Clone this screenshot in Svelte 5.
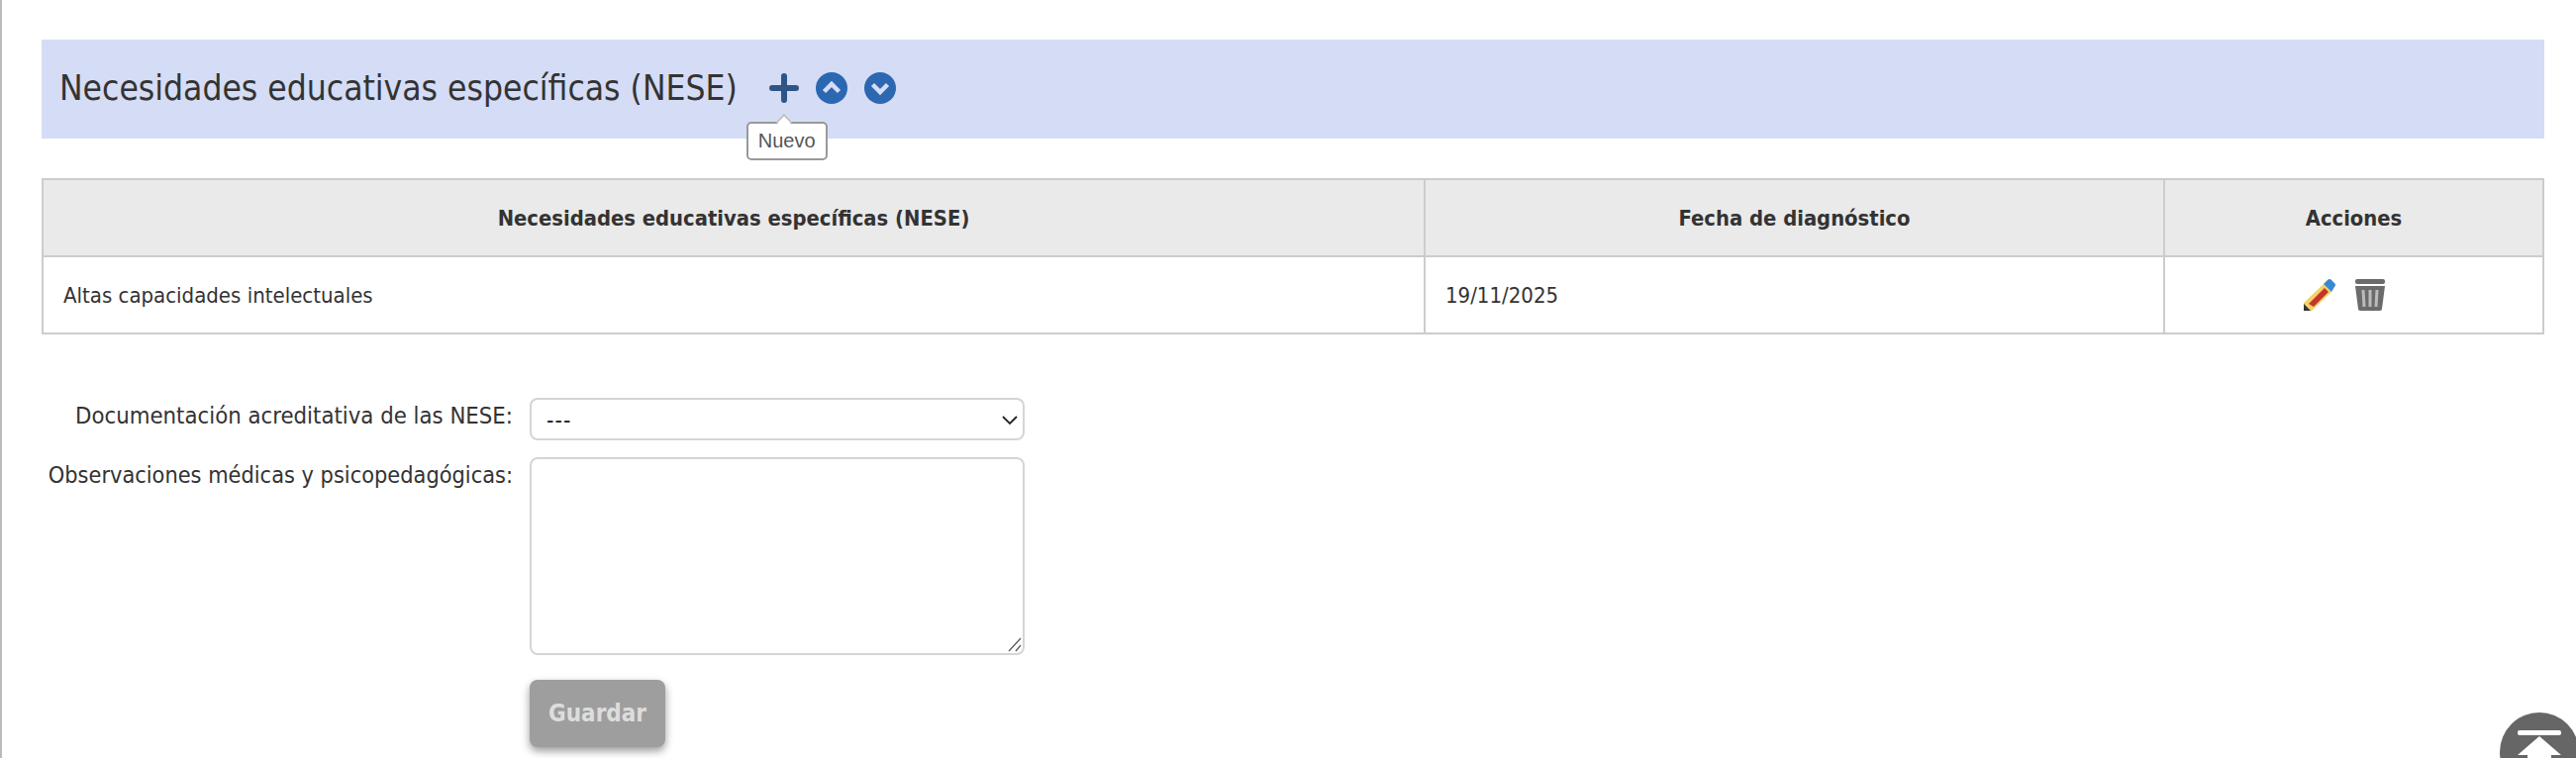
<script>
	const rows = [
		{ nese: "Altas capacidades intelectuales", fecha: "19/11/2025" }
	];
</script>

<div class="page">
	<div class="banner">
		<h2>Necesidades educativas específicas (NESE)</h2>
		<div class="tools">
			<span class="plus-wrap">
				<svg class="plus" width="30" height="30" viewBox="0 0 30 30">
					<path d="M15 3v24M3 15h24" stroke="#2f5587" stroke-width="6" stroke-linecap="round" fill="none" />
				</svg>
				<span class="tooltip">Nuevo</span>
			</span>
			<svg width="32" height="32" viewBox="0 0 32 32">
				<circle cx="16" cy="16" r="16" fill="#2b68b1" />
				<path d="M8.5 19.5 16 12l7.5 7.5" stroke="#d5dcf5" stroke-width="4.5" fill="none" />
			</svg>
			<svg width="32" height="32" viewBox="0 0 32 32">
				<circle cx="16" cy="16" r="16" fill="#2b68b1" />
				<path d="M8.5 12.5 16 20l7.5-7.5" stroke="#d5dcf5" stroke-width="4.5" fill="none" />
			</svg>
		</div>
	</div>

	<table>
		<thead>
			<tr>
				<th class="c1">Necesidades educativas específicas (NESE)</th>
				<th class="c2">Fecha de diagnóstico</th>
				<th>Acciones</th>
			</tr>
		</thead>
		<tbody>
			{#each rows as row}
				<tr>
					<td>{row.nese}</td>
					<td>{row.fecha}</td>
					<td>
						<div class="acciones">
							<svg width="32" height="32" viewBox="0 0 32 32">
								<path d="M0 24 20 5l8 8-20 19H0z" fill="#f4d264" />
								<path d="M5 25 21 9l4 4L10 28z" fill="#c7352a" />
								<path d="M0 25v7h7z" fill="#333" />
								<path d="M20 5l4-4q2-2 4 0l3 3q2 2 0 4l-3 5z" fill="#3a88cf" />
							</svg>
							<svg width="30" height="32" viewBox="0 0 30 32">
								<rect x="0" y="0" width="30" height="5" rx="2" fill="#6b6b6b" />
								<path d="M0 7h30l-3 23c0 1-1 2-2 2H5c-1 0-2-1-2-2z" fill="#6b6b6b" />
								<path d="M8 11l1 17M15 11v17M22 11l-1 17" stroke="#bbb" stroke-width="3" fill="none" />
							</svg>
						</div>
					</td>
				</tr>
			{/each}
		</tbody>
	</table>

	<form class="form">
		<label for="doc">Documentación acreditativa de las NESE:</label>
		<div class="select-wrap">
			<select id="doc">
				<option>---</option>
			</select>
			<svg class="chevron" width="16" height="10" viewBox="0 0 16 10">
				<path d="M1 1l7 7 7-7" stroke="#222" stroke-width="1.8" fill="none" />
			</svg>
		</div>
		<label class="obs" for="obs">Observaciones médicas y psicopedagógicas:</label>
		<div class="text-wrap">
			<textarea id="obs"></textarea>
			<svg class="grip" width="16" height="16" viewBox="0 0 16 16">
				<path d="M2 15 14 2M9 15l5-6" stroke="#555" stroke-width="1.2" fill="none" />
			</svg>
		</div>
		<div></div>
		<div><button type="button" disabled>Guardar</button></div>
	</form>

	<div class="to-top">
		<svg width="80" height="46" viewBox="0 0 80 46">
			<circle cx="40" cy="40" r="40" fill="#666" />
			<rect x="18" y="18" width="44" height="5" rx="2" fill="#fff" />
			<path d="M40 24 18 43h10v3h24v-3h10z" fill="#fff" />
		</svg>
	</div>
</div>

<style>
	:global(body) {
		margin: 0;
		background: #fff;
		color: #333;
		font-family: "DejaVu Sans", sans-serif;
		font-stretch: condensed;
	}
	.page {
		height: 766px;
		box-sizing: border-box;
		padding: 40px 32px 0 40px;
		border-left: 2px solid #bbb;
		position: relative;
		overflow: hidden;
	}
	.banner {
		height: 100px;
		background: #d5dcf5;
		display: flex;
		align-items: center;
		padding: 0 0 2px 18px;
		box-sizing: border-box;
	}
	h2 {
		margin: 0 0 1px;
		font-size: 35.1px;
		font-weight: 400;
	}
	.tools {
		display: flex;
		align-items: center;
		gap: 17px;
		margin-left: 32px;
	}
	.plus-wrap {
		position: relative;
		display: flex;
	}
	.tooltip {
		position: absolute;
		top: 49px;
		left: -23px;
		background: #fff;
		border: 2px solid #999;
		border-radius: 5px;
		font: 20px "Liberation Sans", sans-serif;
		color: #555;
		padding: 6px 10px;
	}
	.tooltip::before {
		content: "";
		position: absolute;
		top: -9px;
		left: 29px;
		width: 12px;
		height: 12px;
		background: #fff;
		border-left: 2px solid #bbb;
		border-top: 2px solid #bbb;
		transform: rotate(45deg) scale(0.8);
	}
	table {
		margin-top: 40px;
		width: 100%;
		border-collapse: collapse;
		table-layout: fixed;
		font-size: 22px;
	}
	th, td {
		border: 2px solid #ccc;
		height: 78px;
		padding: 0 20px;
		box-sizing: border-box;
	}
	th {
		background: #eaeaea;
		font-size: 21.8px;
	}
	.c1 { width: 1396px; }
	.c2 { width: 747px; }
	.acciones {
		display: flex;
		justify-content: center;
		gap: 20px;
		padding-right: 20px;
	}
	.form {
		margin-top: 64px;
		display: grid;
		grid-template-columns: 476px 500px;
		gap: 17px;
		font-size: 23.7px;
	}
	label {
		text-align: right;
		padding-top: 4px;
		white-space: nowrap;
	}
	.obs {
		font-size: 23.3px;
	}
	.select-wrap, .text-wrap {
		position: relative;
		display: flex;
	}
	.chevron {
		position: absolute;
		right: 7px;
		top: 18px;
	}
	select {
		appearance: none;
		width: 100%;
		height: 43px;
		border: 2px solid #d5d5d5;
		border-radius: 8px;
		background: #fff;
		font-size: 23px;
		letter-spacing: 1px;
		padding-left: 15px;
		font-family: inherit;
		font-stretch: inherit;
		color: #222;
	}
	textarea {
		height: 200px;
		border: 2px solid #d5d5d5;
		border-radius: 8px;
		box-sizing: border-box;
		margin: 0;
		display: block;
		width: 100%;
	}
	textarea::-webkit-resizer {
		display: none;
	}
	.grip {
		position: absolute;
		right: 2px;
		bottom: 3px;
		pointer-events: none;
	}
	button {
		display: block;
		height: 68px;
		width: 137px;
		margin-top: 8px;
		padding: 0;
		border: none;
		border-radius: 8px;
		background: #9e9e9e;
		color: #ddd;
		font-size: 24px;
		font-weight: 700;
		font-family: inherit;
		font-stretch: inherit;
		box-shadow: 0 4px 8px rgba(0, 0, 0, 0.4);
	}
	.to-top {
		position: absolute;
		right: -3px;
		bottom: 0;
		display: flex;
	}
</style>
